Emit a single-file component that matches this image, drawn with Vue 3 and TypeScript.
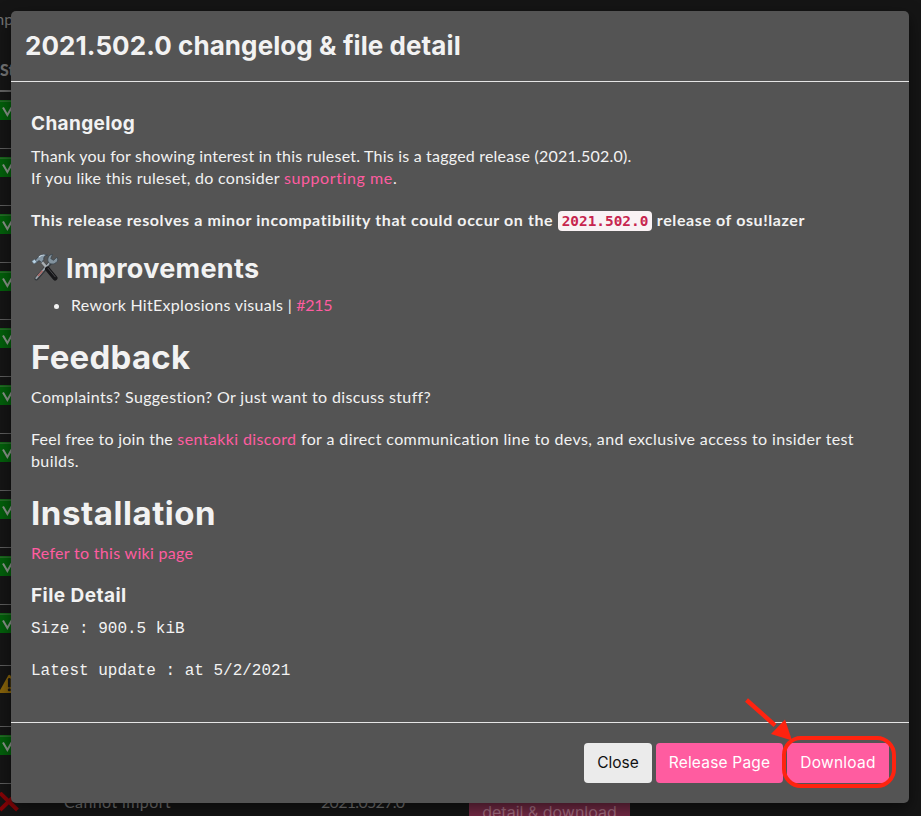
<script setup lang="ts">
type Status = 'ok' | 'warn' | 'fail'

interface Row {
  status: Status
  tall?: boolean
  label?: string
  version?: string
}

const rows: Row[] = [
  ...Array.from({ length: 10 }, (_, i): Row => ({ status: 'ok', tall: i === 9 })),
  { status: 'warn', tall: true },
  { status: 'ok' },
  { status: 'fail', label: 'Cannot import', version: '2021.0527.0' },
]
</script>

<template>
  <div class="stage">
    <div class="page">
      <div class="page-intro">mp</div>
      <div class="table-head">St</div>
      <div v-for="(row, i) in rows" :key="i" class="row" :class="{ tall: row.tall }">
        <svg v-if="row.status === 'ok'" class="status" viewBox="0 0 20 20">
          <rect x="-3" y="0" width="22" height="20" rx="3" fill="#035f0b" />
          <path d="M0 1.2H18" stroke="#2c6d2d" stroke-width="1.4" />
          <path d="M3 7.5L7.4 15L14.5 2.5" fill="none" stroke="#8b948b" stroke-width="2" />
        </svg>
        <svg v-else-if="row.status === 'warn'" class="status" viewBox="0 0 20 20">
          <path d="M8.2 1.5Q9.3 -.2 10.4 1.5L19.4 17Q20 19 18.5 19H.5Q-1 19-.4 17Z" fill="#87630b" />
          <path d="M9.3 5.3V12.2" stroke="#171717" stroke-width="2.7" stroke-linecap="round" />
          <circle cx="9.3" cy="15.8" r="1.5" fill="#171717" />
        </svg>
        <svg v-else class="status" viewBox="0 0 20 20">
          <path d="M0 1L17.5 18M17.5 1L0 18" stroke="#850407" stroke-width="4" />
        </svg>
        <template v-if="row.label">
          <span class="label">{{ row.label }}</span>
          <span class="version">{{ row.version }}</span>
          <span class="detail">detail &amp; download</span>
        </template>
      </div>
    </div>

    <section class="modal">
      <header class="modal-head">
        <h2 class="title">2021.502.0 changelog &amp; file detail</h2>
      </header>

      <div class="modal-body">
        <h4 class="sub">Changelog</h4>
        <p>
          <span class="intro-a">Thank you for showing interest in this ruleset. This is a tagged release (2021.502.0).</span><br />
          <span class="intro-b">If you like this ruleset, do consider </span><a class="support">supporting me</a>.
        </p>
        <p class="strong">This release resolves a minor incompatibility that could occur on the <code>2021.502.0</code> release of osu!lazer</p>

        <h2 class="improve">
          <svg class="tools" viewBox="0 0 28 28">
            <path d="M5.5 25.5L19.5 9.5" stroke="#34383c" stroke-width="4" stroke-linecap="round" />
            <path d="M5.3 25.2L19.2 9.2" stroke="#9aa3aa" stroke-width="1.8" stroke-linecap="round" />
            <path d="M7 23L11.5 17.8" stroke="#a96562" stroke-width="1.6" />
            <path d="M25.8 4.1L22.6 7.3L19.8 5.6L21.5 1.4C17.9 1.4 15.8 5.3 17.3 9.1C19.2 12.4 25.6 11.4 26.9 6.9Z" fill="#83939e" stroke="#39444c" stroke-width=".8" />
            <path d="M10.5 8.5L17 16" stroke="#a8afb3" stroke-width="2.5" />
            <path d="M16.5 16L24 25" stroke="#171719" stroke-width="5" stroke-linecap="round" />
            <path d="M17 15.2L24.2 23.8" stroke="#4b4b4e" stroke-width="1" stroke-linecap="round" />
            <path d="M4 7.5L8 3Q12 .2 16.5 2.2Q12.2 2.8 12.8 6.5L10.6 9.5L8 7.6L5.4 9.8Z" fill="#8597a5" stroke="#35404a" stroke-width=".8" />
            <path d="M8 4Q10 1.8 13.5 2" fill="none" stroke="#c4d1da" stroke-width="1.2" />
            <path d="M.8 8.2L3.6 6.2L5.8 9L3 11Z" fill="#b9d3e5" stroke="#52616d" stroke-width=".6" />
          </svg>
          <span>Improvements</span>
        </h2>
        <ul>
          <li>Rework HitExplosions visuals | <a class="issue">#215</a></li>
        </ul>

        <h1>Feedback</h1>
        <p class="complaints">Complaints? Suggestion? Or just want to discuss stuff?</p>
        <p class="feedback">
          <span class="join">Feel free to join the </span><a>sentakki discord</a> for a direct communication line to devs, and exclusive access to insider test<br />builds.
        </p>

        <h1 class="install">Installation</h1>
        <p class="wiki"><a>Refer to this wiki page</a></p>

        <h4 class="sub file">File Detail</h4>
        <p class="mono">Size : 900.5 kiB</p>
        <p class="mono">Latest update : at 5/2/2021</p>
      </div>

      <footer class="modal-foot">
        <button class="btn close">Close</button>
        <button class="btn release">Release Page</button>
        <button class="btn download">Download</button>
      </footer>
    </section>

    <svg class="marker" viewBox="0 0 160 100">
      <path d="M6.5 10L35 35.3" stroke="#ff230f" stroke-width="4.4" />
      <path d="M52 50.5L31 44L45 29.5Z" fill="#ff230f" />
      <rect x="44" y="48" width="110" height="48" rx="17" fill="none" stroke="#ff230f" stroke-width="4" />
    </svg>
  </div>
</template>

<style>
body {
  background: #151515;
}
</style>

<style scoped>
.stage {
  position: relative;
  box-sizing: border-box;
  width: 921px;
  height: 816px;
  padding: 11px 12px 13px 11px;
  overflow: hidden;
  background: #151515;
  color: #f2f2f2;
  font: 16px/22px Lato, sans-serif;
}

.page {
  position: absolute;
  inset: 0;
  overflow: hidden;
  padding-right: 30px;
  color: #747474;
}

.page-intro {
  height: 40px;
  margin-left: -9px;
  padding-top: 8px;
  box-sizing: border-box;
}

.table-head {
  height: 52px;
  box-sizing: border-box;
  padding-top: 19px;
  border-bottom: 2px solid #626262;
  font-weight: 900;
}

.row {
  display: flex;
  height: 57px;
  box-sizing: border-box;
  padding-top: 8px;
  border-bottom: 1px solid #5c5c5c;
}

.row.tall {
  height: 61px;
}

.row .status {
  flex: none;
  width: 20px;
  height: 20px;
}

.label {
  width: 257px;
  margin: -1px 0 0 44px;
  letter-spacing: 0.4px;
}

.version {
  width: 148px;
  margin-top: -1px;
  letter-spacing: -0.7px;
}

.detail {
  width: 161px;
  height: 40px;
  box-sizing: border-box;
  padding-top: 9px;
  background: #722944;
  color: #a06b7e;
  text-align: center;
  font-family: Inter, sans-serif;
}

.modal {
  position: relative;
  display: flex;
  flex-direction: column;
  height: 792px;
  border-radius: 5px;
  background: #545454;
  box-shadow: 0 5px 15px rgba(0, 0, 0, 0.5);
}

.modal-head {
  height: 71px;
  box-sizing: border-box;
  padding: 19px 14px 0;
  border-bottom: 1px solid #e5e5e5;
}

h1,
h2,
h4,
p,
ul {
  margin: 0;
}

h1,
h2,
h4 {
  font-family: Inter, sans-serif;
  font-weight: 700;
}

.title {
  font-size: 26px;
  line-height: 32px;
  letter-spacing: 0.08px;
}

.modal-body {
  flex: 1;
  padding: 30px 20px 0;
}

.sub {
  margin-bottom: 9px;
  font-size: 19px;
  line-height: 24px;
  letter-spacing: 0.35px;
}

p {
  margin-bottom: 20px;
}

a {
  color: #ff5ca0;
}

.intro-a {
  letter-spacing: 0.21px;
}

.intro-b {
  letter-spacing: 0.29px;
}

.support {
  letter-spacing: 0.6px;
}

.strong {
  height: 22px;
  font-weight: 700;
  letter-spacing: 0.6px;
  white-space: nowrap;
}

code {
  padding: 2px 4px;
  border-radius: 4px;
  background: #f9f2f4;
  color: #c7254e;
  font: 700 14.4px/16px "DejaVu Sans Mono", monospace;
  letter-spacing: 0;
}

.improve {
  display: flex;
  gap: 7px;
  margin: 22px 0 9px;
  font-size: 27px;
  line-height: 32px;
  letter-spacing: 0.3px;
}

.tools {
  width: 28px;
  height: 28px;
}

ul {
  padding-left: 40px;
  letter-spacing: 0.29px;
}

.issue {
  letter-spacing: -0.3px;
}

h1 {
  margin: 21px 0 9px;
  font-size: 33px;
  line-height: 40px;
  letter-spacing: 0.25px;
}

.install {
  letter-spacing: 0.55px;
}

.complaints {
  letter-spacing: 0.35px;
}

.feedback {
  letter-spacing: 0.39px;
}

.join {
  letter-spacing: 0.24px;
}

.wiki {
  letter-spacing: 0.3px;
}

.file {
  margin: 19px 0 10px;
  letter-spacing: 0.45px;
}

.mono {
  font-family: "Liberation Mono", monospace;
}

.modal-foot {
  display: flex;
  justify-content: flex-end;
  gap: 4px;
  height: 81px;
  box-sizing: border-box;
  padding: 20px;
  border-top: 1px solid #e5e5e5;
}

.btn {
  height: 40px;
  padding: 0;
  border: 0;
  border-radius: 4px;
  background: #ff5ca0;
  color: #fff;
  font: 15.5px/40px Inter, sans-serif;
}

.close {
  width: 68px;
  background: #ebebeb;
  color: #111;
}

.release {
  width: 127px;
  letter-spacing: 0.2px;
}

.download {
  width: 102px;
  letter-spacing: 0.25px;
}

.marker {
  position: absolute;
  left: 740px;
  top: 690px;
  width: 160px;
  height: 100px;
}
</style>
